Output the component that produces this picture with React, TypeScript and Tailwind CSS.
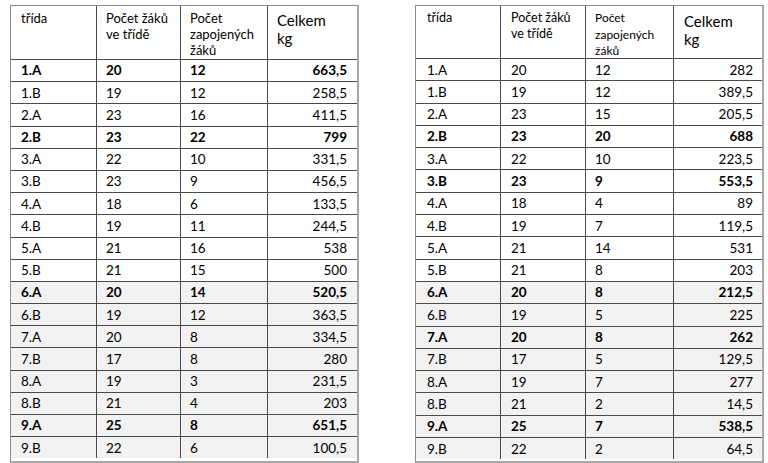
type Row = { c: string; n: string; z: string; kg: string; b?: boolean };

const left: Row[] = [
  { c: "1.A", n: "20", z: "12", kg: "663,5", b: true },
  { c: "1.B", n: "19", z: "12", kg: "258,5" },
  { c: "2.A", n: "23", z: "16", kg: "411,5" },
  { c: "2.B", n: "23", z: "22", kg: "799", b: true },
  { c: "3.A", n: "22", z: "10", kg: "331,5" },
  { c: "3.B", n: "23", z: "9", kg: "456,5" },
  { c: "4.A", n: "18", z: "6", kg: "133,5" },
  { c: "4.B", n: "19", z: "11", kg: "244,5" },
  { c: "5.A", n: "21", z: "16", kg: "538" },
  { c: "5.B", n: "21", z: "15", kg: "500" },
  { c: "6.A", n: "20", z: "14", kg: "520,5", b: true },
  { c: "6.B", n: "19", z: "12", kg: "363,5" },
  { c: "7.A", n: "20", z: "8", kg: "334,5" },
  { c: "7.B", n: "17", z: "8", kg: "280" },
  { c: "8.A", n: "19", z: "3", kg: "231,5" },
  { c: "8.B", n: "21", z: "4", kg: "203" },
  { c: "9.A", n: "25", z: "8", kg: "651,5", b: true },
  { c: "9.B", n: "22", z: "6", kg: "100,5" },
];

const right: Row[] = [
  { c: "1.A", n: "20", z: "12", kg: "282" },
  { c: "1.B", n: "19", z: "12", kg: "389,5" },
  { c: "2.A", n: "23", z: "15", kg: "205,5" },
  { c: "2.B", n: "23", z: "20", kg: "688", b: true },
  { c: "3.A", n: "22", z: "10", kg: "223,5" },
  { c: "3.B", n: "23", z: "9", kg: "553,5", b: true },
  { c: "4.A", n: "18", z: "4", kg: "89" },
  { c: "4.B", n: "19", z: "7", kg: "119,5" },
  { c: "5.A", n: "21", z: "14", kg: "531" },
  { c: "5.B", n: "21", z: "8", kg: "203" },
  { c: "6.A", n: "20", z: "8", kg: "212,5", b: true },
  { c: "6.B", n: "19", z: "5", kg: "225" },
  { c: "7.A", n: "20", z: "8", kg: "262", b: true },
  { c: "7.B", n: "17", z: "5", kg: "129,5" },
  { c: "8.A", n: "19", z: "7", kg: "277" },
  { c: "8.B", n: "21", z: "2", kg: "14,5" },
  { c: "9.A", n: "25", z: "7", kg: "538,5", b: true },
  { c: "9.B", n: "22", z: "2", kg: "64,5" },
];

const TableLeft = () => (
  <div className="w-[349px] border-l border-t border-l-[#8c8c8c] border-t-[#8c8c8c] border-r-2 border-b-2 border-r-[#a8a8a8] border-b-[#a8a8a8]">
    <div className="grid grid-cols-[85px_84px_87px_90px] h-[53px] text-[13px] leading-[16px]">
      <div className="pl-[10px] pt-[4px]">třída</div>
      <div className="border-l border-[#4a4a4a] pl-[9px] pt-[4px]">
        Počet žáků
        <br />
        ve třídě
      </div>
      <div className="border-l border-[#4a4a4a] pl-[9px] pt-[4px]">
        Počet
        <br />
        zapojených
        <br />
        žáků
      </div>
      <div className="border-l border-[#4a4a4a] pl-[9px] pt-[5px] text-[15px] leading-[18px]">
        Celkem
        <br />
        kg
      </div>
    </div>
    {left.map((r, i) => (
      <div
        key={r.c}
        className={`grid grid-cols-[85px_84px_87px_90px] h-[22.2px] border-t border-[#4a4a4a] items-center text-[13.5px] ${
          i >= 10 ? "bg-[#f2f2f2]" : "bg-white"
        } ${r.b ? "font-bold" : ""}`}
      >
        <div className="pl-[10px]">{r.c}</div>
        <div className="h-full flex items-center border-l border-[#4a4a4a] pl-[9px]">{r.n}</div>
        <div className="h-full flex items-center border-l border-[#4a4a4a] pl-[9px]">{r.z}</div>
        <div className="h-full flex items-center justify-end border-l border-[#4a4a4a] pr-[10px]">{r.kg}</div>
      </div>
    ))}
  </div>
);

const TableRight = () => (
  <div className="w-[349px] border-l border-t border-l-[#8c8c8c] border-t-[#8c8c8c] border-r-2 border-b-2 border-r-[#a8a8a8] border-b-[#a8a8a8]">
    <div className="grid grid-cols-[84px_85px_88px_89px] h-[52px] text-[12px] leading-[16px]">
      <div className="pl-[11px] pt-[4px] text-[12.5px]">třída</div>
      <div className="border-l border-[#4a4a4a] pl-[10px] pt-[4px] text-[12.5px] leading-[16px]">
        Počet žáků
        <br />
        ve třídě
      </div>
      <div className="border-l border-[#4a4a4a] pl-[9px] pt-[4px] leading-[16.5px]">
        Počet
        <br />
        zapojených
        <br />
        žáků
      </div>
      <div className="border-l border-[#4a4a4a] pl-[10px] pt-[6px] text-[15px] leading-[18px]">
        Celkem
        <br />
        kg
      </div>
    </div>
    {right.map((r, i) => (
      <div
        key={r.c}
        className={`grid grid-cols-[84px_85px_88px_89px] h-[22.3px] border-t border-[#4a4a4a] items-center text-[13.5px] ${
          i >= 10 ? "bg-[#f2f2f2]" : "bg-white"
        } ${r.b ? "font-bold" : ""}`}
      >
        <div className="pl-[11px]">{r.c}</div>
        <div className="h-full flex items-center border-l border-[#4a4a4a] pl-[10px]">{r.n}</div>
        <div className="h-full flex items-center border-l border-[#4a4a4a] pl-[9px]">{r.z}</div>
        <div className="h-full flex items-center justify-end border-l border-[#4a4a4a] pr-[9px]">{r.kg}</div>
      </div>
    ))}
  </div>
);

export default function App() {
  return (
    <div className="w-[768px] h-[463px] bg-white text-black flex gap-[56px] pl-[10px] pt-[5px] font-['Lato','Open_Sans',sans-serif] overflow-hidden">
      <TableLeft />
      <TableRight />
    </div>
  );
}
